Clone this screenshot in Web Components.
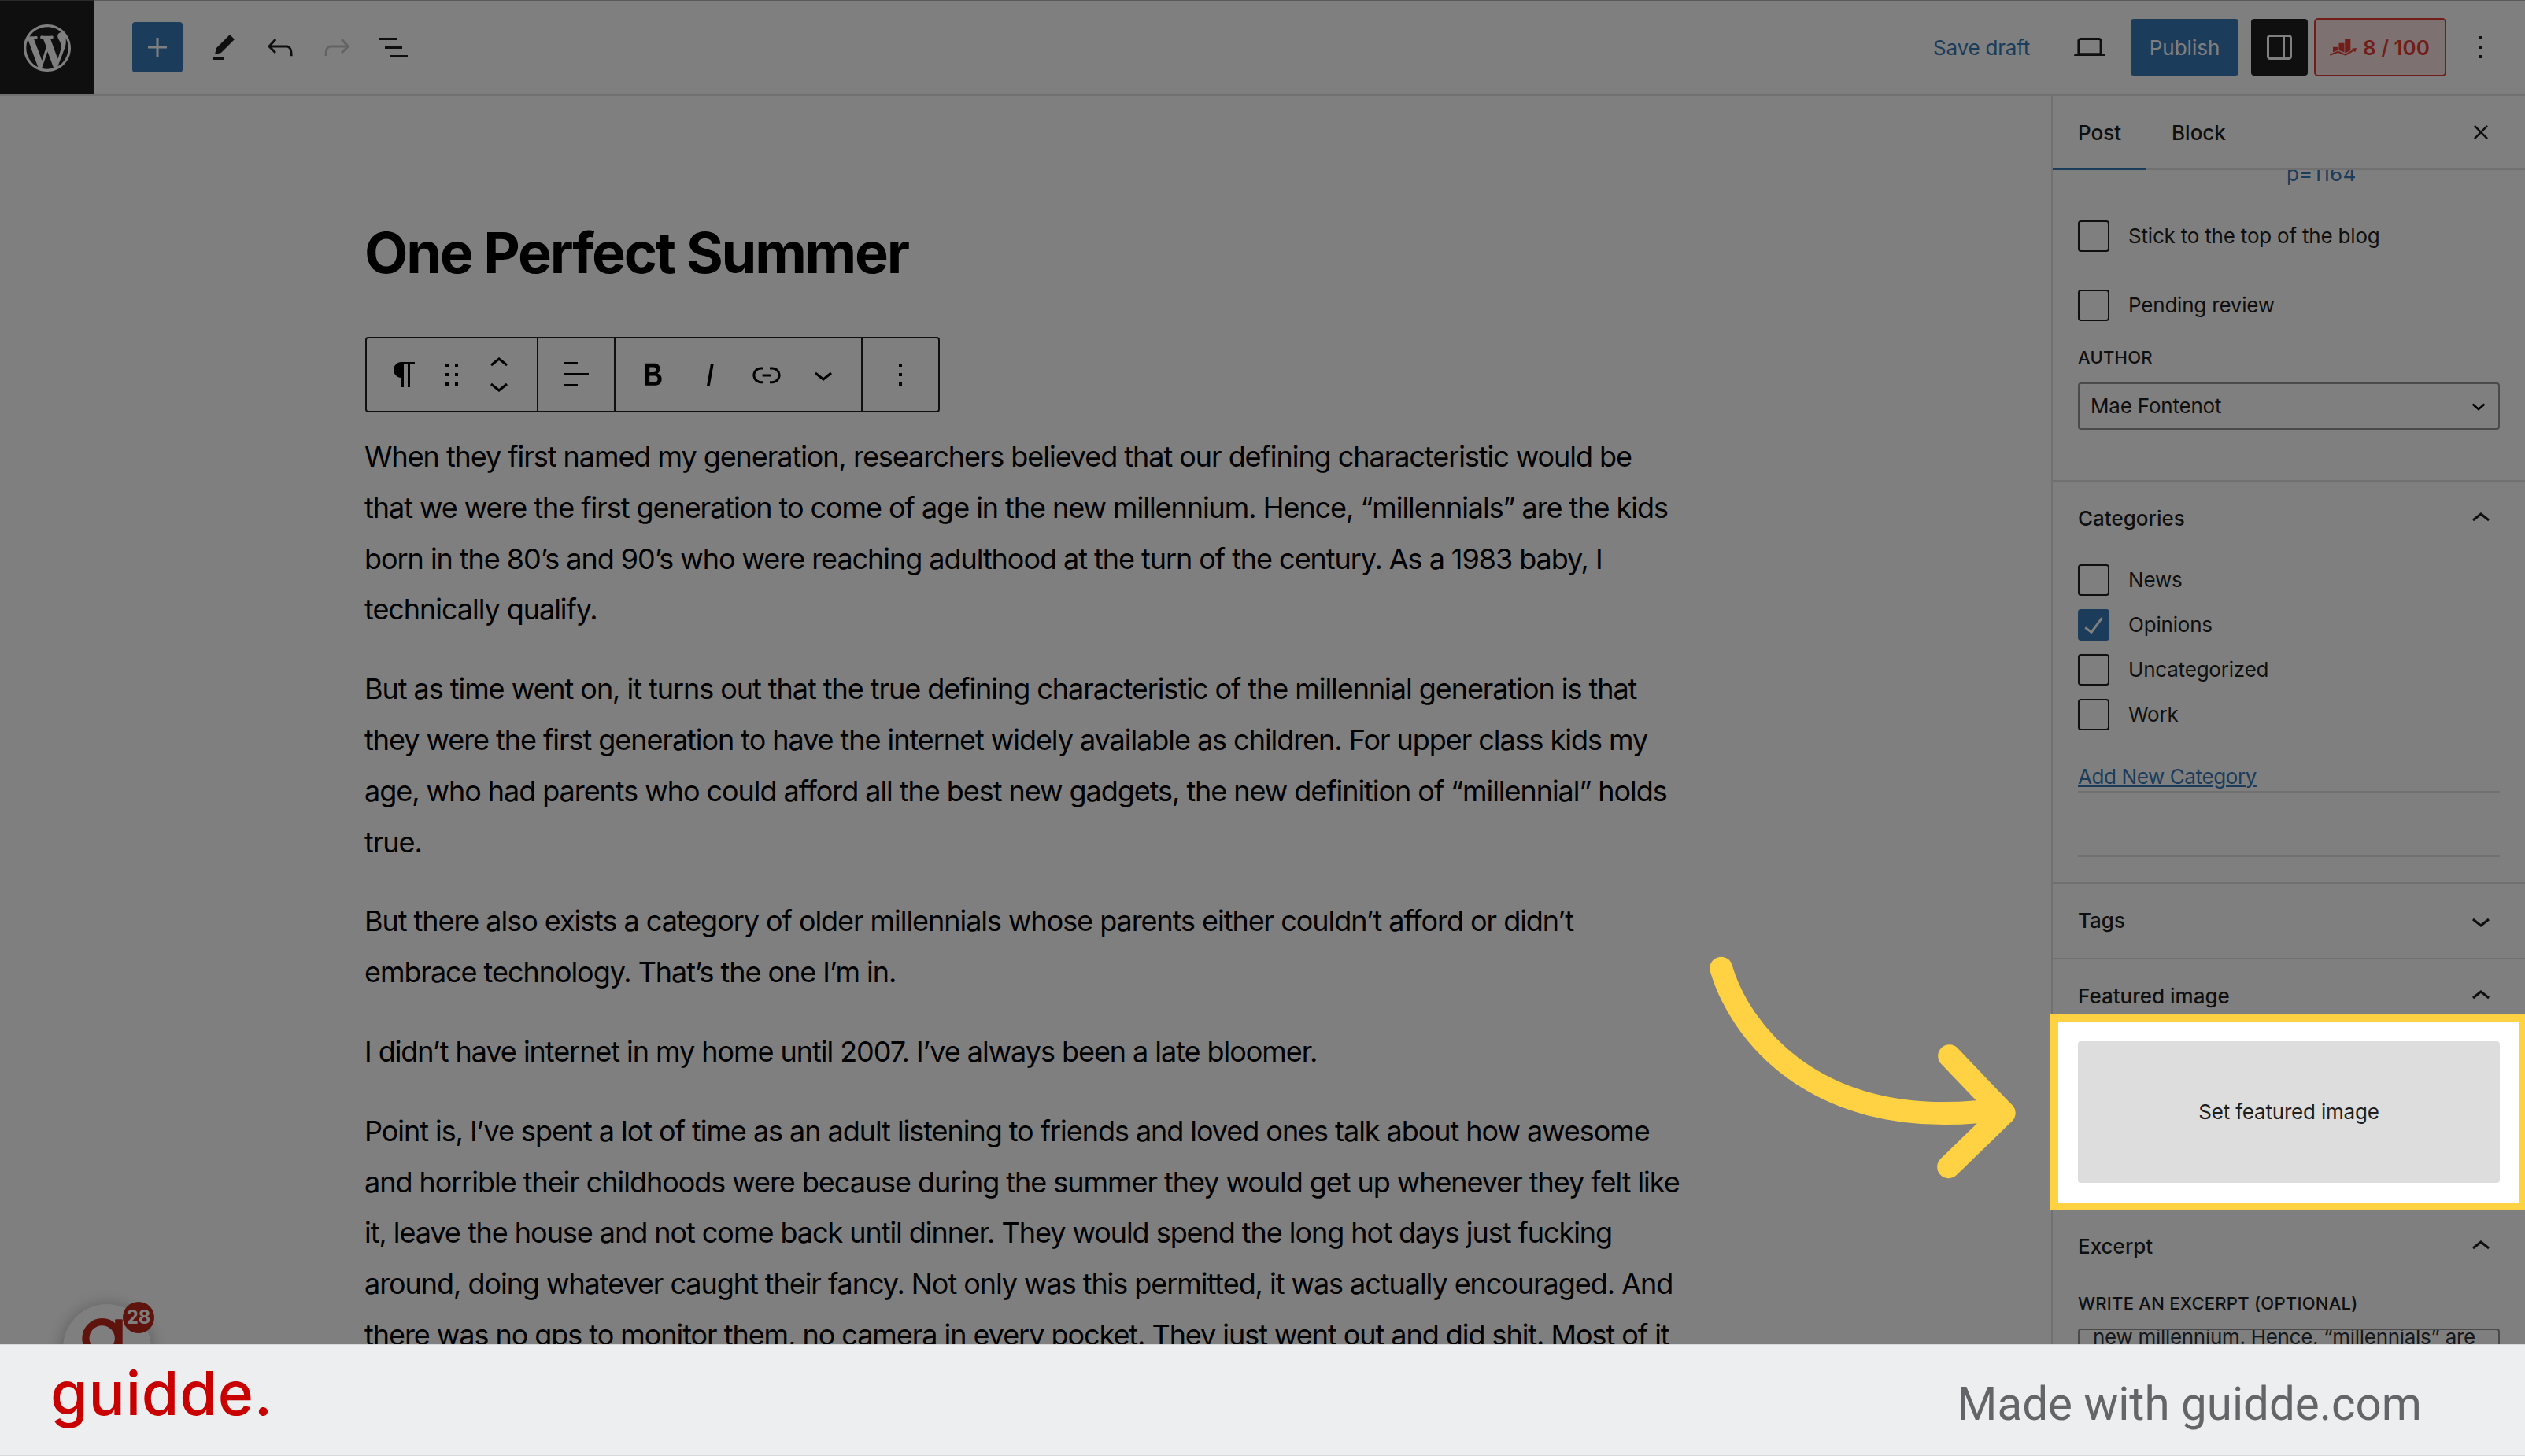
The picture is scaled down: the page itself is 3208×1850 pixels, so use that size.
<!DOCTYPE html>
<html lang="en">
<head>
<meta charset="utf-8">
<title>One Perfect Summer</title>
<style>
    :root {
        --x-font: Inter, "Liberation Sans", sans-serif;
        --x-ink: #1e1e1e;
        --x-blue: #3678b4;
        --x-line: #e0e0e0;
        --x-yellow: #ffd243;
    }

    body {
        margin: 0;
        width: 3208px;
        height: 1850px;
        overflow: hidden;
        background: white;
        font-family: var(--x-font);
        font-size: 26px;
        line-height: 32px;
        letter-spacing: -0.2px;
        color: var(--x-ink);
    }
</style>
</head>
<body>
<x-app>
    <x-header slot="header"></x-header>

    <x-editor slot="editor">
        <h1 slot="title">One Perfect Summer</h1>
        <p>When they first named my generation, researchers believed that our defining characteristic would be<br>that we were the first generation to come of age in the new millennium. Hence, “millennials” are the kids<br>born in the 80’s and 90’s who were reaching adulthood at the turn of the century. As a 1983 baby, I<br>technically qualify.</p>
        <p>But as time went on, it turns out that the true defining characteristic of the millennial generation is that<br>they were the first generation to have the internet widely available as children. For upper class kids my<br>age, who had parents who could afford all the best new gadgets, the new definition of “millennial” holds<br>true.</p>
        <p>But there also exists a category of older millennials whose parents either couldn’t afford or didn’t<br>embrace technology. That’s the one I’m in.</p>
        <p>I didn’t have internet in my home until 2007. I’ve always been a late bloomer.</p>
        <p>Point is, I’ve spent a lot of time as an adult listening to friends and loved ones talk about how awesome<br>and horrible their childhoods were because during the summer they would get up whenever they felt like<br>it, leave the house and not come back until dinner. They would spend the long hot days just fucking<br>around, doing whatever caught their fancy. Not only was this permitted, it was actually encouraged. And<br>there was no gps to monitor them, no camera in every pocket. They just went out and did shit. Most of it</p>
    </x-editor>

    <x-sidebar slot="sidebar">
        <x-status></x-status>

        <x-panel label="Categories" open>
            <x-categories>
                <x-checkbox>News</x-checkbox>
                <x-checkbox checked>Opinions</x-checkbox>
                <x-checkbox>Uncategorized</x-checkbox>
                <x-checkbox>Work</x-checkbox>
            </x-categories>
        </x-panel>

        <x-panel label="Tags"></x-panel>

        <x-panel label="Featured image" open>
            <x-featured>Set featured image</x-featured>
        </x-panel>

        <x-panel label="Excerpt" open>
            <x-excerpt label="Write an excerpt (optional)">new millennium. Hence, “millennials” are</x-excerpt>
        </x-panel>
    </x-sidebar>

    <x-launcher slot="overlay" count="28"></x-launcher>
    <x-spotlight slot="overlay"></x-spotlight>
    <x-footer slot="footer">Made with guidde.com</x-footer>
</x-app>

<script>
    const ICONS = {
        wordpress: "M22 12c0-5.51-4.49-10-10-10C6.48 2 2 6.49 2 12c0 5.52 4.48 10 10 10 5.51 0 10-4.48 10-10zM9.78 17.37L6.37 8.22c.55-.02 1.17-.08 1.17-.08.5-.06.44-1.13-.06-1.11 0 0-1.45.11-2.37.11-.18 0-.37 0-.58-.01C6.12 4.69 8.87 3.11 12 3.11c2.33 0 4.45.87 6.05 2.34-.68-.11-1.65.39-1.65 1.58 0 .74.45 1.36.9 2.1.35.61.55 1.36.55 2.46 0 1.49-1.4 5-1.4 5l-3.03-8.37c.54-.02.82-.17.82-.17.5-.05.44-1.25-.06-1.22 0 0-1.44.12-2.38.12-.87 0-2.33-.12-2.33-.12-.5-.03-.56 1.2-.06 1.22l.92.08 1.26 3.41zM19.41 12c.24-.64.74-1.87.43-4.25.7 1.29 1.05 2.71 1.05 4.25 0 3.29-1.73 6.24-4.4 7.78.97-2.59 1.94-5.2 2.92-7.78zM8.1 20.09C5.12 18.65 3.11 15.53 3.11 12c0-1.3.23-2.48.72-3.59C5.25 12.3 6.67 16.2 8.1 20.09zm4.03-6.63l2.58 6.98c-.86.29-1.76.45-2.71.45-.79 0-1.57-.11-2.29-.33.81-2.38 1.62-4.74 2.42-7.1z",
        plus: "M11.25 6h1.5v5.25H18v1.5h-5.25V18h-1.5v-5.25H6v-1.5h5.25z",
        edit: "m19 7-3-3-8.5 8.5-1 4 4-1L19 7Zm-7 11.5H5V20h7v-1.5Z",
        undo: "M18.3 11.7c-.6-.6-1.4-.9-2.3-.9H6.7l2.9-3.3-1.1-1-4.5 5L8.5 16l1-1-2.7-2.7H16c.5 0 .9.2 1.3.5 1 1 1 3.4 1 4.5v.3h1.5v-.2c0-1.5 0-4.3-1.5-5.7z",
        redo: "M15.6 6.5l-1.1 1 2.9 3.3H8c-.9 0-1.7.3-2.3.9-1.4 1.5-1.4 4.2-1.4 5.6v.2h1.5v-.3c0-1.1 0-3.5 1-4.5.3-.3.7-.5 1.3-.5h9.2L14.5 15l1.1 1.1 4.6-4.6-4.6-5z",
        list: "M3 6h11v1.5H3V6zm3.5 5.5h11V13h-11v-1.5zM21 17H10v1.5h11V17z",
        desktop: "M20.5 16h-.7V8c0-1.1-.9-2-2-2H6.2c-1.1 0-2 .9-2 2v8h-.7c-.8 0-1.5.7-1.5 1.5h20c0-.8-.7-1.5-1.5-1.5zM5.7 8c0-.3.2-.5.5-.5h11.6c.3 0 .5.2.5.5v7.6H5.7V8z",
        drawer: "M18 4H6c-1.1 0-2 .9-2 2v12c0 1.1.9 2 2 2h12c1.1 0 2-.9 2-2V6c0-1.1-.9-2-2-2zm-4 14.5H6c-.3 0-.5-.2-.5-.5V6c0-.3.2-.5.5-.5h8v13zm4.5-.5c0 .3-.2.5-.5.5h-2.500v-13H18c.3 0 .5.2.5.5v12z",
        more: "M13 19h-2v-2h2v2zm0-6h-2v-2h2v2zm0-6h-2V5h2v2z",
        close: "M16.5 8.4l-.9-.9L12 11.1 8.4 7.5l-.9.9 3.6 3.6-3.6 3.6.9.9 3.6-3.6 3.6 3.6.9-.9-3.6-3.6z",
        paragraph: "m9.99609 14v-.2251l.00391.0001v6.225h1.5v-14.5h2.5v14.5h1.5v-14.5h3v-1.5h-8.50391c-2.76142 0-5 2.23858-5 5 0 2.7614 2.23858 5 5 5z",
        drag: "M8 7h2V5H8v2zm0 6h2v-2H8v2zm0 6h2v-2H8v2zm6-14v2h2V5h-2zm0 8h2v-2h-2v2zm0 6h2v-2h-2v2z",
        up: "M6.5 12.4L12 8l5.5 4.4-.9 1.2L12 10l-4.5 3.6-1-1.2z",
        down: "M17.5 11.6L12 16l-5.5-4.4.9-1.2L12 14l4.5-3.6 1 1.2z",
        align: "M13 5.5H4V4h9v1.5Zm7 7H4V11h16v1.5Zm-7 7H4V18h9v1.5Z",
        bold: "M14.7 11.3c1-.6 1.5-1.6 1.5-3 0-2.3-1.3-3.4-4-3.4H7v14h5.8c1.4 0 2.5-.3 3.3-1 .8-.7 1.2-1.7 1.2-2.9.1-1.9-.8-3.1-2.6-3.7zm-5.1-4h2.3c.6 0 1.1.1 1.4.4.3.3.5.7.5 1.2s-.2 1-.5 1.2c-.3.3-.8.4-1.4.4H9.6V7.3zm4.6 9c-.4.3-1 .4-1.7.4H9.6v-3.9h2.9c.7 0 1.3.2 1.7.5.4.3.6.8.6 1.5s-.2 1.2-.6 1.5z",
        italic: "M12.5 5L10 19h1.9l2.5-14z",
        link: "M15.6 7.2H14v1.5h1.6c2 0 3.7 1.7 3.7 3.7s-1.7 3.7-3.7 3.7H14v1.5h1.6c2.8 0 5.2-2.3 5.2-5.2 0-2.9-2.3-5.2-5.2-5.2zM4.7 12.4c0-2 1.7-3.7 3.7-3.7H10V7.2H8.4c-2.9 0-5.2 2.3-5.2 5.2 0 2.9 2.3 5.2 5.2 5.2H10v-1.5H8.4c-2 0-3.7-1.7-3.7-3.7zm4.6.9h5.3v-1.5H9.3v1.5z",
        check: "M16.7 7.1l-6.3 8.5-3.3-2.5-.9 1.2 4.5 3.4L17.9 8z",
    }

    class Icon extends HTMLElement {
        constructor() {
            super()
            this.attachShadow({ mode: "open" })
            const size = this.getAttribute("size") ?? "48"
            this.shadowRoot.innerHTML = `
                <style>
                    :host { display: block; flex: none; width: ${size}px; height: ${size}px; }
                    svg { display: block; fill: currentColor; }
                </style>
                <svg width="${size}" height="${size}" viewBox="0 0 24 24">
                    <path d="${ICONS[this.getAttribute("name")]}"/>
                </svg>
            `
        }
    }

    class App extends HTMLElement {
        constructor() {
            super()
            this.attachShadow({ mode: "open" })
            this.shadowRoot.innerHTML = `
                <style>
                    :host { display: flex; flex-direction: column; height: 1850px; }
                    .stage {
                        position: relative;
                        display: flex;
                        flex-direction: column;
                        height: 1708px;
                        overflow: hidden;
                    }
                    .body { display: flex; height: 1586px; }
                </style>
                <div class="stage">
                    <slot name="header"></slot>
                    <div class="body">
                        <slot name="editor"></slot>
                        <slot name="sidebar"></slot>
                    </div>
                    <slot name="overlay"></slot>
                </div>
                <slot name="footer"></slot>
            `
        }
    }

    class Header extends HTMLElement {
        constructor() {
            super()
            this.attachShadow({ mode: "open" })
            this.shadowRoot.innerHTML = `
                <style>
                    :host {
                        display: flex;
                        align-items: center;
                        justify-content: space-between;
                        height: 120px;
                        border-bottom: 2px solid var(--x-line);
                        box-shadow: inset 0 1px #b4b4b4;
                    }
                    div { display: flex; align-items: center; }
                    .home {
                        justify-content: center;
                        box-sizing: border-box;
                        width: 120px;
                        height: 120px;
                        border-top: 1px solid #555;
                        background: var(--x-ink);
                        color: white;
                    }
                    .add {
                        justify-content: center;
                        width: 64px;
                        height: 64px;
                        margin: 0 4px 0 24px;
                        border-radius: 4px;
                        background: var(--x-blue);
                        color: white;
                    }
                    .tools { gap: 24px; }
                    .off { color: #c8c8c8; }
                    span { padding-top: 1px; }
                    .save { width: 122px; margin-right: 53px; color: var(--x-blue); white-space: nowrap; }
                    .publish {
                        justify-content: center;
                        width: 137px;
                        height: 72px;
                        margin: 0 16px 0 28px;
                        border-radius: 4px;
                        background: var(--x-blue);
                        color: white;
                        letter-spacing: 0;
                    }
                    .toggle {
                        justify-content: center;
                        width: 72px;
                        height: 72px;
                        margin-right: 8px;
                        border-radius: 4px;
                        background: var(--x-ink);
                        color: white;
                    }
                    .score {
                        box-sizing: border-box;
                        width: 168px;
                        height: 74px;
                        padding-left: 18px;
                        gap: 8px;
                        border: 2px solid #e23d34;
                        border-radius: 5px;
                        background: #fde3e2;
                        color: #e23d34;
                        font-weight: 600;
                        letter-spacing: 0;
                        white-space: nowrap;
                    }
                    .more { margin: 0 32px 0 20px; }
                </style>
                <div class="tools">
                    <div class="home"><x-icon name="wordpress" size="72"></x-icon></div>
                    <div class="add"><x-icon name="plus"></x-icon></div>
                    <x-icon name="edit"></x-icon>
                    <x-icon name="undo"></x-icon>
                    <x-icon name="redo" class="off"></x-icon>
                    <x-icon name="list"></x-icon>
                </div>
                <div>
                    <span class="save">Save draft</span>
                    <x-icon name="desktop"></x-icon>
                    <div class="publish"><span>Publish</span></div>
                    <div class="toggle"><x-icon name="drawer"></x-icon></div>
                    <div class="score">
                        <svg width="34" height="21" viewBox="0 0 34 21">
                            <g fill="currentColor">
                                <path d="M4 9.700h6.800v4L4 16.200z"/>
                                <path d="M11.500 4.700h7v11.900l-7-2.700z"/>
                                <path d="M19.200 0h7.100v14l-6.300 3.300-.8-.3z"/>
                                <path d="M28 11.800l6-.9-1.800 5.700z"/>
                            </g>
                            <path fill="none" stroke="currentColor" stroke-width="2" d="M.3 19.800l10.200-3.900 9.500 3.700 11-6.300"/>
                        </svg>
                        <span>8 / 100</span>
                    </div>
                    <x-icon name="more" class="more"></x-icon>
                </div>
            `
        }
    }

    class Toolbar extends HTMLElement {
        constructor() {
            super()
            this.attachShadow({ mode: "open" })
            this.shadowRoot.innerHTML = `
                <style>
                    :host {
                        display: inline-flex;
                        box-sizing: border-box;
                        height: 96px;
                        border: 2px solid var(--x-ink);
                        border-radius: 4px;
                    }
                    .group {
                        display: flex;
                        align-items: center;
                        gap: 24px;
                        padding: 0 24px;
                    }
                    .group + .group { border-left: 2px solid var(--x-ink); }
                    .block { gap: 12px; }
                    .mover { height: 76px; overflow: hidden; }
                    .mover x-icon + x-icon { margin-top: -20px; }
                </style>
                <div class="group block">
                    <x-icon name="paragraph"></x-icon>
                    <x-icon name="drag"></x-icon>
                    <div class="mover">
                        <x-icon name="up"></x-icon>
                        <x-icon name="down"></x-icon>
                    </div>
                </div>
                <div class="group"><x-icon name="align"></x-icon></div>
                <div class="group">
                    <x-icon name="bold"></x-icon>
                    <x-icon name="italic"></x-icon>
                    <x-icon name="link"></x-icon>
                    <x-icon name="down"></x-icon>
                </div>
                <div class="group"><x-icon name="more"></x-icon></div>
            `
        }
    }

    class Editor extends HTMLElement {
        constructor() {
            super()
            this.attachShadow({ mode: "open" })
            this.shadowRoot.innerHTML = `
                <style>
                    :host {
                        display: block;
                        box-sizing: border-box;
                        width: 2606px;
                        padding: 155px 0 0 463px;
                        color: black;
                    }
                    ::slotted(h1) {
                        margin: 0 0 63px;
                        font-size: 72px;
                        line-height: 88px;
                        font-weight: 700;
                        letter-spacing: -2.25px;
                        white-space: nowrap;
                    }
                    ::slotted(p) {
                        margin: 0 0 36px;
                        font-size: 36px;
                        line-height: 64.8px;
                        letter-spacing: -1.05px;
                        white-space: nowrap;
                    }
                    x-toolbar { margin: 0 0 24px 1px; vertical-align: top; }
                </style>
                <slot name="title"></slot>
                <x-toolbar></x-toolbar>
                <slot></slot>
            `
        }
    }

    class Sidebar extends HTMLElement {
        constructor() {
            super()
            this.attachShadow({ mode: "open" })
            this.shadowRoot.innerHTML = `
                <style>
                    :host {
                        display: block;
                        width: 600px;
                        border-left: 2px solid var(--x-line);
                    }
                    .tabs {
                        display: flex;
                        box-sizing: border-box;
                        height: 94px;
                        border-bottom: 2px solid var(--x-line);
                        font-weight: 500;
                        line-height: 94px;
                        letter-spacing: 0;
                    }
                    .tab { padding: 0 32px; height: 94px; box-sizing: border-box; }
                    .active { width: 119px; border-bottom: 3px solid var(--x-blue); }
                    x-icon { margin: 22px 32px 0 auto; }
                    .content { height: 1492px; overflow: hidden; }
                </style>
                <div class="tabs">
                    <div class="tab active">Post</div>
                    <div class="tab">Block</div>
                    <x-icon name="close"></x-icon>
                </div>
                <div class="content"><slot></slot></div>
            `
        }
    }

    class Checkbox extends HTMLElement {
        constructor() {
            super()
            this.attachShadow({ mode: "open" })
            const checked = this.hasAttribute("checked")
            this.shadowRoot.innerHTML = `
                <style>
                    :host { display: flex; align-items: center; gap: 24px; height: 40px; }
                    .box {
                        box-sizing: border-box;
                        width: 40px;
                        height: 40px;
                        border: 2px solid var(--x-ink);
                        border-radius: 4px;
                    }
                    .checked {
                        border-color: var(--x-blue);
                        background: var(--x-blue);
                        color: white;
                    }
                    .checked x-icon { margin: -6px; }
                </style>
                <div class="box ${checked ? "checked" : ""}">
                    ${checked ? `<x-icon name="check"></x-icon>` : ""}
                </div>
                <span><slot></slot></span>
            `
        }
    }

    class Status extends HTMLElement {
        constructor() {
            super()
            this.attachShadow({ mode: "open" })
            this.shadowRoot.innerHTML = `
                <style>
                    :host { display: flow-root; padding: 0 32px 64px; }
                    .permalink { margin: -11px 0 43px 265px; color: var(--x-blue); letter-spacing: 0.2px; }
                    x-checkbox + x-checkbox { margin-top: 48px; }
                    .label {
                        margin: 32px 0 18px;
                        font-size: 22px;
                        line-height: 28px;
                        font-weight: 500;
                        letter-spacing: 0.25px;
                        text-transform: uppercase;
                    }
                    .select {
                        display: flex;
                        align-items: center;
                        justify-content: space-between;
                        box-sizing: border-box;
                        height: 60px;
                        padding: 0 14px;
                        border: 2px solid #949494;
                        border-radius: 4px;
                    }
                    svg { margin: 2px 2px 0 0; }
                </style>
                <div class="permalink">p=1164</div>
                <x-checkbox>Stick to the top of the blog</x-checkbox>
                <x-checkbox>Pending review</x-checkbox>
                <div class="label">Author</div>
                <div class="select">
                    <span>Mae Fontenot</span>
                    <svg width="18" height="10" viewBox="0 0 18 10">
                        <path fill="none" stroke="#000" stroke-width="2.600" d="M1.500 1.500 9 8l7.500-6.500"/>
                    </svg>
                </div>
            `
        }
    }

    class Panel extends HTMLElement {
        constructor() {
            super()
            this.attachShadow({ mode: "open" })
            const open = this.hasAttribute("open")
            this.shadowRoot.innerHTML = `
                <style>
                    :host { display: block; border-top: 2px solid var(--x-line); }
                    .title {
                        display: flex;
                        align-items: center;
                        justify-content: space-between;
                        height: 94px;
                        padding: 0 32px;
                        font-weight: 500;
                        letter-spacing: 0;
                    }
                    .content { padding: 0 32px ${open ? 32 : 0}px; }
                </style>
                <div class="title">
                    <span>${this.getAttribute("label")}</span>
                    <x-icon name="${open ? "up" : "down"}"></x-icon>
                </div>
                <div class="content"><slot></slot></div>
            `
        }
    }

    class Categories extends HTMLElement {
        constructor() {
            super()
            this.attachShadow({ mode: "open" })
            this.shadowRoot.innerHTML = `
                <style>
                    :host { display: block; padding-top: 11px; }
                    .list { display: flex; flex-direction: column; gap: 17px; margin-bottom: 43px; }
                    .add {
                        display: block;
                        color: var(--x-blue);
                        letter-spacing: -0.4px;
                        text-decoration: underline;
                        text-decoration-thickness: 2px;
                        text-underline-offset: 2px;
                    }
                    .rule {
                        height: 80px;
                        margin-top: 2px;
                        border: solid var(--x-line);
                        border-width: 2px 0;
                    }
                </style>
                <div class="list"><slot></slot></div>
                <span class="add">Add New Category</span>
                <div class="rule"></div>
            `
        }
    }

    class Featured extends HTMLElement {
        constructor() {
            super()
            this.attachShadow({ mode: "open" })
            this.shadowRoot.innerHTML = `
                <style>
                    :host {
                        display: flex;
                        align-items: center;
                        justify-content: center;
                        height: 180px;
                        margin-top: 10px;
                        border-radius: 4px;
                        background: #ddd;
                    }
                </style>
                <slot></slot>
            `
        }
    }

    class Excerpt extends HTMLElement {
        constructor() {
            super()
            this.attachShadow({ mode: "open" })
            this.shadowRoot.innerHTML = `
                <style>
                    :host { display: block; padding-top: 11px; }
                    .label {
                        margin-bottom: 18px;
                        font-size: 22px;
                        line-height: 28px;
                        font-weight: 500;
                        letter-spacing: 0.25px;
                        text-transform: uppercase;
                        white-space: nowrap;
                    }
                    .area {
                        height: 160px;
                        padding: 0 17px;
                        border: 2px solid #949494;
                        border-radius: 4px;
                        overflow: hidden;
                        color: #2c3338;
                    }
                    .text { margin-top: -7px; letter-spacing: -0.3px; white-space: nowrap; }
                </style>
                <div class="label">${this.getAttribute("label")}</div>
                <div class="area"><div class="text"><slot></slot></div></div>
            `
        }
    }

    // floating launcher in the corner of the editor
    class Launcher extends HTMLElement {
        constructor() {
            super()
            this.attachShadow({ mode: "open" })
            this.shadowRoot.innerHTML = `
                <style>
                    :host {
                        position: absolute;
                        left: 80px;
                        top: 1657px;
                        width: 112px;
                        height: 112px;
                        border-radius: 50%;
                        background: white;
                        box-shadow: 0 2px 22px rgba(0, 0, 0, .3);
                    }
                    .count {
                        position: absolute;
                        left: 76px;
                        top: -3px;
                        width: 40px;
                        height: 40px;
                        border-radius: 50%;
                        background: #be261a;
                        color: white;
                        font-size: 24px;
                        line-height: 40px;
                        font-weight: 700;
                        letter-spacing: 0;
                        text-align: center;
                    }
                </style>
                <svg width="112" height="112" viewBox="0 0 112 112">
                    <circle cx="49.700" cy="43.500" r="20.800" fill="none" stroke="#be261a" stroke-width="9.200"/>
                    <rect x="66.200" y="19.300" width="9.500" height="44" rx="1" fill="#be261a"/>
                </svg>
                <div class="count">${this.getAttribute("count")}</div>
            `
        }
    }

    // dims everything but the framed control and points an arrow at it
    class Spotlight extends HTMLElement {
        constructor() {
            super()
            this.attachShadow({ mode: "open" })
            this.shadowRoot.innerHTML = `
                <style>
                    :host { position: absolute; inset: 0; }
                    .frame {
                        position: absolute;
                        left: 2605px;
                        top: 1288px;
                        width: 586px;
                        height: 230px;
                        border: 10px solid var(--x-yellow);
                        box-shadow: 0 0 0 4000px rgba(0, 0, 0, .5);
                    }
                    svg { position: absolute; left: 2140px; top: 1180px; }
                </style>
                <div class="frame"></div>
                <svg width="440" height="340" viewBox="0 0 440 340">
                    <g fill="none" stroke="#ffd243" stroke-width="29" stroke-linecap="round" stroke-linejoin="round">
                        <path d="M46.700 50.300C70 130 163 251 371.700 232.700L406 234.300"/>
                        <path d="M336.700 161.800 406 234.300 335.700 302.700"/>
                    </g>
                </svg>
            `
        }
    }

    class Footer extends HTMLElement {
        constructor() {
            super()
            this.attachShadow({ mode: "open" })
            this.shadowRoot.innerHTML = `
                <style>
                    :host {
                        display: flex;
                        justify-content: space-between;
                        box-sizing: border-box;
                        height: 142px;
                        padding: 0 131px 0 64px;
                        border-top: 1px solid #d8d9da;
                        border-bottom: 1px solid #d8d9da;
                        background: #edeef0;
                        white-space: nowrap;
                    }
                    .brand {
                        padding-top: 14px;
                        font-size: 77px;
                        line-height: 94px;
                        font-weight: 500;
                        letter-spacing: 0.8px;
                        color: #c90000;
                    }
                    .made {
                        padding-top: 41px;
                        font-family: Roboto, sans-serif;
                        font-size: 58.3px;
                        line-height: 68px;
                        letter-spacing: 0;
                        color: #636569;
                    }
                </style>
                <div class="brand">guidde.</div>
                <div class="made"><slot></slot></div>
            `
        }
    }

    customElements.define("x-icon", Icon)
    customElements.define("x-app", App)
    customElements.define("x-header", Header)
    customElements.define("x-toolbar", Toolbar)
    customElements.define("x-editor", Editor)
    customElements.define("x-sidebar", Sidebar)
    customElements.define("x-checkbox", Checkbox)
    customElements.define("x-status", Status)
    customElements.define("x-panel", Panel)
    customElements.define("x-categories", Categories)
    customElements.define("x-featured", Featured)
    customElements.define("x-excerpt", Excerpt)
    customElements.define("x-launcher", Launcher)
    customElements.define("x-spotlight", Spotlight)
    customElements.define("x-footer", Footer)
</script>
</body>
</html>
